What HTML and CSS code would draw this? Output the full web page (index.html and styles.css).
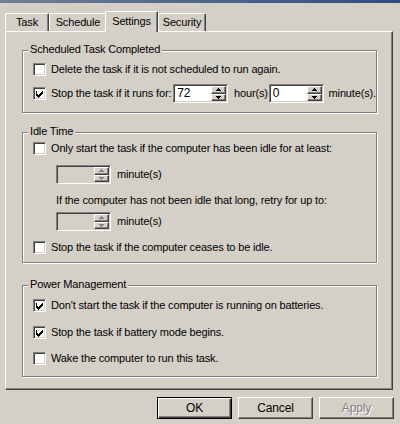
FILE: index.html
```html
<!DOCTYPE html>
<html lang="en">
<head>
    <meta charset="UTF-8">
    <meta name="viewport" content="width=device-width, initial-scale=1.0">
    <title>Settings</title>
    <link rel="stylesheet" href="styles.css">
</head>
<body>
    <div class="titlebar"></div>

    <div class="tabs">
        <div class="tab tab-task">Task</div>
        <div class="tab tab-schedule">Schedule</div>
        <div class="tab tab-settings active">Settings</div>
        <div class="tab tab-security">Security</div>
    </div>

    <div class="panel">
        <div class="group group-completed">
            <span class="group-title">Scheduled Task Completed</span>
            <div class="row row-check">
                <span class="check"></span>
                <span>Delete the task if it is not scheduled to run again.</span>
            </div>
            <div class="row row-stop">
                <span class="check checked"><svg width="9" height="9" viewBox="0 0 9 9"><path d="M1 2h1v3h1v1h1v-1h1v-1h1v-1h1v-1h1v3h-1v1h-1v1h-1v1h-1v1h-1v-1h-1v-1h-1z"/></svg></span>
                <span>Stop the task if it runs for:</span>
                <span class="spin spin-hours">
                    <span class="spin-value">72</span>
                    <span class="spin-buttons">
                        <span class="spin-btn"><svg width="5" height="3" viewBox="0 0 5 3"><path d="M2 0h1v1h-1zM1 1h3v1h-3zM0 2h5v1h-5z"/></svg></span>
                        <span class="spin-btn"><svg width="5" height="3" viewBox="0 0 5 3"><path d="M0 0h5v1h-5zM1 1h3v1h-3zM2 2h1v1h-1z"/></svg></span>
                    </span>
                </span>
                <span class="unit-hours">hour(s)</span>
                <span class="spin spin-minutes">
                    <span class="spin-value">0</span>
                    <span class="spin-buttons">
                        <span class="spin-btn"><svg width="5" height="3" viewBox="0 0 5 3"><path d="M2 0h1v1h-1zM1 1h3v1h-3zM0 2h5v1h-5z"/></svg></span>
                        <span class="spin-btn"><svg width="5" height="3" viewBox="0 0 5 3"><path d="M0 0h5v1h-5zM1 1h3v1h-3zM2 2h1v1h-1z"/></svg></span>
                    </span>
                </span>
                <span class="unit-minutes">minute(s).</span>
            </div>
        </div>

        <div class="group group-idle">
            <span class="group-title">Idle Time</span>
            <div class="row row-check">
                <span class="check"></span>
                <span>Only start the task if the computer has been idle for at least:</span>
            </div>
            <div class="row row-spin row-spin-first">
                <span class="spin disabled">
                    <span class="spin-value"></span>
                    <span class="spin-buttons">
                        <span class="spin-btn"><svg width="5" height="3" viewBox="0 0 5 3"><path d="M2 0h1v1h-1zM1 1h3v1h-3zM0 2h5v1h-5z"/></svg></span>
                        <span class="spin-btn"><svg width="5" height="3" viewBox="0 0 5 3"><path d="M0 0h5v1h-5zM1 1h3v1h-3zM2 2h1v1h-1z"/></svg></span>
                    </span>
                </span>
                <span class="unit">minute(s)</span>
            </div>
            <div class="row row-text">If the computer has not been idle that long, retry for up to:</div>
            <div class="row row-spin row-spin-second">
                <span class="spin disabled">
                    <span class="spin-value"></span>
                    <span class="spin-buttons">
                        <span class="spin-btn"><svg width="5" height="3" viewBox="0 0 5 3"><path d="M2 0h1v1h-1zM1 1h3v1h-3zM0 2h5v1h-5z"/></svg></span>
                        <span class="spin-btn"><svg width="5" height="3" viewBox="0 0 5 3"><path d="M0 0h5v1h-5zM1 1h3v1h-3zM2 2h1v1h-1z"/></svg></span>
                    </span>
                </span>
                <span class="unit">minute(s)</span>
            </div>
            <div class="row row-check row-ceases">
                <span class="check"></span>
                <span>Stop the task if the computer ceases to be idle.</span>
            </div>
        </div>

        <div class="group group-power">
            <span class="group-title">Power Management</span>
            <div class="row row-check">
                <span class="check checked"><svg width="9" height="9" viewBox="0 0 9 9"><path d="M1 2h1v3h1v1h1v-1h1v-1h1v-1h1v-1h1v3h-1v1h-1v1h-1v1h-1v1h-1v-1h-1v-1h-1z"/></svg></span>
                <span>Don't start the task if the computer is running on batteries.</span>
            </div>
            <div class="row row-check row-battery">
                <span class="check checked"><svg width="9" height="9" viewBox="0 0 9 9"><path d="M1 2h1v3h1v1h1v-1h1v-1h1v-1h1v-1h1v3h-1v1h-1v1h-1v1h-1v1h-1v-1h-1v-1h-1z"/></svg></span>
                <span>Stop the task if battery mode begins.</span>
            </div>
            <div class="row row-check row-wake">
                <span class="check"></span>
                <span>Wake the computer to run this task.</span>
            </div>
        </div>
    </div>

    <div class="buttons">
        <button class="btn btn-default">OK</button>
        <button class="btn">Cancel</button>
        <button class="btn btn-disabled">Apply</button>
    </div>
</body>
</html>
```

FILE: styles.css
```css
body {
    margin: 0;
    width: 400px;
    height: 424px;
    overflow: hidden;
    background-color: #d4d0c8;
    color: #000;
    font-family: "Liberation Sans", Arial, sans-serif;
    font-size: 11px;
    letter-spacing: -0.15px;
}

.titlebar {
    height: 3px;
    background: linear-gradient(to right, #6f7f96, #2d4d82);
}

/* tabs */

.tabs {
    display: flex;
    align-items: flex-end;
    height: 28px;
    padding-left: 5px;
}

.tab {
    box-sizing: border-box;
    height: 18px;
    border: 1px solid;
    border-bottom: none;
    border-color: #fff #404040 #fff #fff;
    border-radius: 2px 2px 0 0;
    box-shadow: inset -1px 0 #808080;
    background-color: #d4d0c8;
    line-height: 17px;
    text-align: center;
}

.tab-task {
    width: 44px;
}

.tab-schedule {
    width: 58px;
}

.tab-settings {
    width: 53px;
    margin: 0 0 0 -2px;
}

.tab-security {
    width: 48px;
}

.tab.active {
    position: relative;
    z-index: 1;
    height: 21px;
    margin-bottom: -1px;
    line-height: 18px;
}

/* panel */

.panel {
    box-sizing: border-box;
    width: 388px;
    height: 359px;
    margin-left: 5px;
    padding-top: 18px;
    border: 1px solid;
    border-color: #fff #404040 #404040 #fff;
    box-shadow: inset -1px -1px #808080;
}

.group {
    position: relative;
    box-sizing: border-box;
    width: 355px;
    margin-left: 16px;
    border: 1px solid #808080;
    box-shadow: inset 1px 1px #fff, 1px 1px #fff;
}

.group-title {
    position: absolute;
    top: -8px;
    left: 5px;
    padding: 0 2px;
    line-height: 13px;
    background-color: #d4d0c8;
}

.group-completed {
    padding: 10px 0 9px;
}

.group-idle {
    margin-top: 19px;
    padding: 7px 0;
}

.group-power {
    margin-top: 22px;
    padding: 11px 0 10px;
}

.row {
    display: flex;
    align-items: center;
    margin-left: 10px;
    white-space: nowrap;
}

.row-check {
    height: 16px;
}

.row-stop {
    height: 20px;
    margin-top: 6px;
}

.row-spin {
    height: 20px;
    margin-left: 33px;
}

.row-spin-first {
    margin-top: 8px;
}

.row-text {
    height: 14px;
    margin-top: 9px;
    margin-left: 33px;
}

.row-spin-second {
    margin-top: 4px;
}

.row-ceases {
    margin-top: 8px;
}

.row-battery {
    margin-top: 11px;
}

.row-wake {
    margin-top: 10px;
}

/* checkbox */

.check {
    display: flex;
    align-items: center;
    justify-content: center;
    box-sizing: border-box;
    width: 13px;
    height: 13px;
    margin-right: 5px;
    border: 1px solid;
    border-color: #808080 #fff #fff #808080;
    box-shadow: inset 1px 1px #404040, inset -1px -1px #d4d0c8;
    background-color: #fff;
}

.check svg {
    fill: #000;
}

/* spin fields */

.spin {
    display: flex;
    box-sizing: border-box;
    width: 55px;
    height: 19px;
    padding: 1px;
    border: 1px solid;
    border-color: #808080 #fff #fff #808080;
    box-shadow: inset 1px 1px #404040, inset -1px -1px #d4d0c8;
    background-color: #fff;
}

.spin-hours {
    margin-left: 2px;
}

.spin-minutes {
    margin-left: 1px;
}

.spin-value {
    flex: 1;
    padding-left: 2px;
    line-height: 15px;
    font-size: 12px;
}

.spin-buttons {
    display: flex;
    flex-direction: column;
    width: 15px;
}

.spin-btn {
    display: flex;
    align-items: center;
    justify-content: center;
    box-sizing: border-box;
    height: 8px;
    border: 1px solid;
    border-color: #fff #404040 #404040 #fff;
    box-shadow: inset -1px -1px #808080;
    background-color: #d4d0c8;
}

.spin-btn:last-child {
    height: 7px;
}

.spin-btn svg {
    fill: #000;
}

.spin.disabled {
    background-color: #d4d0c8;
}

.spin.disabled .spin-btn svg {
    fill: #808080;
}

.unit-hours {
    margin-left: 6px;
}

.unit-minutes {
    margin-left: 5px;
}

.unit {
    margin-left: 6px;
}

/* dialog buttons */

.buttons {
    display: flex;
    justify-content: flex-end;
    gap: 6px;
    margin-top: 7px;
    padding-right: 6px;
}

.btn {
    box-sizing: border-box;
    width: 75px;
    height: 22px;
    padding: 0;
    border: 1px solid;
    border-color: #fff #404040 #404040 #fff;
    box-shadow: inset -1px -1px #808080;
    background-color: #d4d0c8;
    color: #000;
    font-family: inherit;
    font-size: 12px;
    letter-spacing: -0.15px;
}

.btn-default {
    border-color: #000;
    box-shadow: inset 1px 1px #fff, inset -1px -1px #404040, inset -2px -2px #808080;
}

.btn-disabled {
    color: #808080;
    text-shadow: 1px 1px #fff;
}
```
